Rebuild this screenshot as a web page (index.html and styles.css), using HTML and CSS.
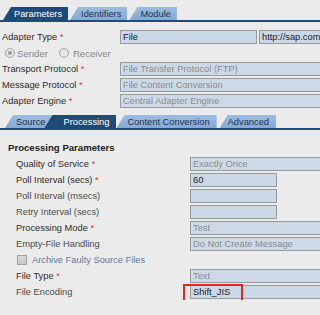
FILE: index.html
```html
<!DOCTYPE html>
<html lang="en">
<head>
    <meta charset="UTF-8">
    <title>Communication Channel - Sender File Adapter</title>
    <link rel="stylesheet" href="styles.css">
</head>
<body>
    <div class="tabs tabs-top">
        <span class="tab active">Parameters</span>
        <span class="tab">Identifiers</span>
        <span class="tab">Module</span>
    </div>

    <div class="form top-form">
        <div class="row">
            <label class="lbl req">Adapter Type <b>*</b></label>
            <div class="field">
                <input class="inp inp-file" type="text" value="File" readonly>
                <input class="inp inp-ns" type="text" value="http://sap.com/xi/XI/System" readonly>
            </div>
        </div>
        <div class="row radios">
            <span class="radio on"></span><span class="radio-text">Sender</span>
            <span class="radio radio-gap"></span><span class="radio-text">Receiver</span>
        </div>
        <div class="row">
            <label class="lbl req">Transport Protocol <b>*</b></label>
            <div class="field"><input class="inp inp-long off" type="text" value="File Transfer Protocol (FTP)" disabled></div>
        </div>
        <div class="row">
            <label class="lbl req">Message Protocol <b>*</b></label>
            <div class="field"><input class="inp inp-long off" type="text" value="File Content Conversion" disabled></div>
        </div>
        <div class="row">
            <label class="lbl req">Adapter Engine <b>*</b></label>
            <div class="field"><input class="inp inp-long off" type="text" value="Central Adapter Engine" disabled></div>
        </div>
    </div>

    <div class="tabs tabs-sub">
        <span class="tab">Source</span>
        <span class="tab active tab-wide">Processing</span>
        <span class="tab tab-flush">Content Conversion</span>
        <span class="tab tab-last">Advanced</span>
    </div>

    <h3 class="section-title">Processing Parameters</h3>

    <div class="form proc-form">
        <div class="row">
            <label class="lbl req">Quality of Service <b>*</b></label>
            <div class="field"><input class="inp inp-long off" type="text" value="Exactly Once" disabled></div>
        </div>
        <div class="row">
            <label class="lbl req">Poll Interval (secs) <b>*</b></label>
            <div class="field"><input class="inp inp-short" type="text" value="60"></div>
        </div>
        <div class="row">
            <label class="lbl">Poll Interval (msecs)</label>
            <div class="field"><input class="inp inp-short" type="text" value=""></div>
        </div>
        <div class="row">
            <label class="lbl">Retry Interval (secs)</label>
            <div class="field"><input class="inp inp-short" type="text" value=""></div>
        </div>
        <div class="row">
            <label class="lbl req">Processing Mode <b>*</b></label>
            <div class="field"><input class="inp inp-long off" type="text" value="Test" disabled></div>
        </div>
        <div class="row">
            <label class="lbl">Empty-File Handling</label>
            <div class="field"><input class="inp inp-long off" type="text" value="Do Not Create Message" disabled></div>
        </div>
        <div class="row check-row">
            <span class="checkbox"></span><span class="check-text">Archive Faulty Source Files</span>
        </div>
        <div class="row">
            <label class="lbl req">File Type <b>*</b></label>
            <div class="field"><input class="inp inp-long off" type="text" value="Text" disabled></div>
        </div>
        <div class="row">
            <label class="lbl">File Encoding</label>
            <div class="field marked">
                <input class="inp inp-long" type="text" value="Shift_JIS">
                <span class="mark"></span>
            </div>
        </div>
    </div>
</body>
</html>
```

FILE: styles.css
```css
html, body {
    overflow: hidden;
}
body {
    margin: 0;
    background: #ebebeb;
    font-family: "Liberation Sans", Arial, sans-serif;
    font-size: 9.3px;
    color: #333;
}

/* tab strips */
.tabs {
    display: flex;
    align-items: flex-end;
    border-bottom: 2px solid #204c79;
}
.tabs-top { margin-top: 7px; padding-left: 3px; }
.tabs-sub { margin-top: 6px; padding-left: 5px; }
.tab {
    height: 13px;
    line-height: 14px;
    padding: 0 6px 0 11px;
    margin-right: 2px;
    background: linear-gradient(#9dbde2, #86a9d2);
    color: #1e3150;
    font-size: 9.3px;
    white-space: nowrap;
    clip-path: polygon(8px 0, 100% 0, 100% 100%, 0 100%);
}
.tab.active {
    background: #1f4a78;
    color: #fff;
}
.tabs-sub .tab { padding-right: 7px; margin-right: 0; }
.tab-wide { margin-left: -8px; padding-left: 19px !important; }
.tab-last { margin-left: 3px; padding-left: 8px !important; }

/* forms */
.form { display: flex; flex-direction: column; }
.top-form { margin-top: 7px; }
.row {
    display: flex;
    align-items: center;
    height: 16px;
}
.lbl {
    flex: none;
    color: #4a4a4a;
    white-space: nowrap;
}
.lbl.req { color: #2b2b2b; }
.lbl b {
    font-weight: normal;
    color: #e3343e;
}
.top-form .lbl { width: 118px; padding-left: 2px; }
.proc-form .lbl { width: 174px; padding-left: 16px; }

.field {
    flex: 1;
    display: flex;
    gap: 2px;
    overflow: hidden;
    min-width: 0;
}
.inp {
    box-sizing: border-box;
    height: 14px;
    margin: 0;
    padding: 0 2px;
    border: 1px solid #9a9a9a;
    border-radius: 0;
    background: #cbd8e7;
    font-family: "Liberation Sans", Arial, sans-serif;
    font-size: 9.3px;
    color: #1b1b1b;
    outline: none;
}
.inp.off { color: #8c8c8c; background: #cdd9e6; }
.inp-file { width: 137px; flex: none; }
.inp-ns { flex: none; width: 120px; }
.inp-long { flex: none; width: calc(100% + 10px); }
.inp-short { flex: none; width: 87px; }

/* radios */
.radios { padding-left: 5px; color: #8a8a8a; font-size: 9.6px; }
.radio {
    box-sizing: border-box;
    width: 10px;
    height: 10px;
    border: 1px solid #a3a3a3;
    border-radius: 50%;
    background: #e6e6e6;
    display: flex;
    align-items: center;
    justify-content: center;
}
.radio.on::after {
    content: "";
    width: 4px;
    height: 4px;
    border-radius: 50%;
    background: #9a9a9a;
}
.radio-text { margin-left: 2px; }
.radio-gap { margin-left: 11px; }
.radios .radio-text:last-child { margin-left: 4px; }

.section-title {
    margin: 10px 0 0;
    padding-left: 8px;
    height: 16px;
    line-height: 16px;
    font-size: 9.6px;
    font-weight: bold;
    color: #222;
}

/* checkbox */
.check-row { padding-left: 17px; }
.checkbox {
    box-sizing: border-box;
    width: 10px;
    height: 10px;
    border: 1px solid #a0a0a0;
    background: linear-gradient(#d9d9d9, #c9c9c9);
}
.check-text { margin-left: 5px; color: #65799a; }

/* annotation */
.marked { position: relative; overflow: visible; }
.mark {
    position: absolute;
    left: -7px;
    top: -1px;
    width: 60px;
    height: 19px;
    box-sizing: border-box;
    border: 2px solid #e1261f;
}
```
